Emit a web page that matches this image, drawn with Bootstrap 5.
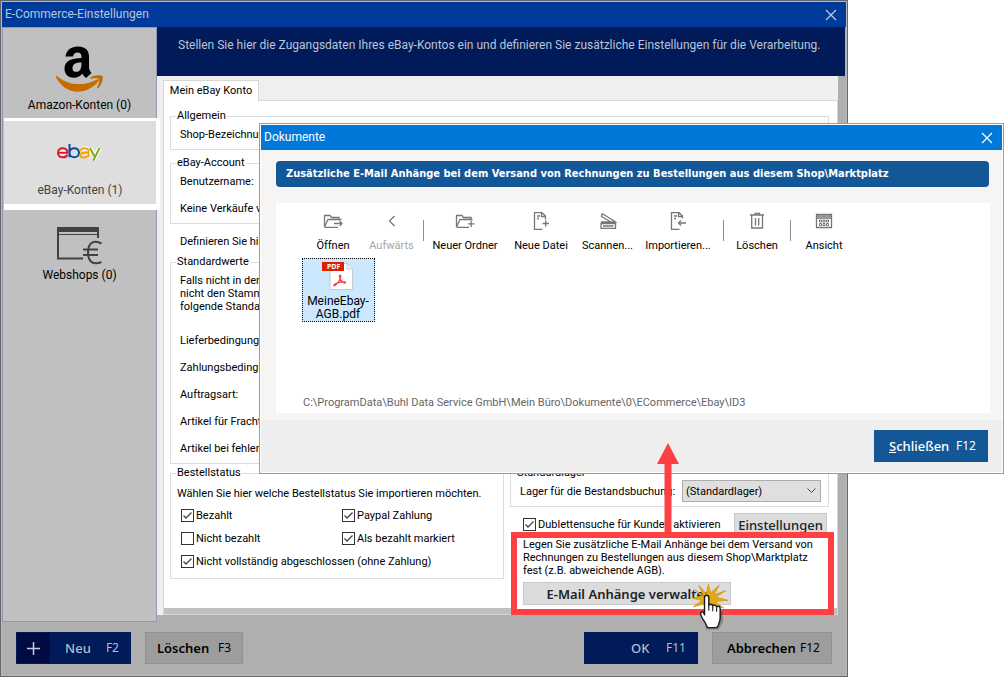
<!DOCTYPE html>
<html lang="de">
<head>
<meta charset="utf-8">
<meta name="viewport" content="width=device-width, initial-scale=1">
<title>E-Commerce-Einstellungen</title>
<link rel="stylesheet" href="https://cdn.jsdelivr.net/npm/bootstrap@5.3.0/dist/css/bootstrap.min.css">
<script defer src="https://cdn.jsdelivr.net/npm/bootstrap@5.3.0/dist/js/bootstrap.bundle.min.js"></script>
<style>
  :root { --navy: #001a5a; --dim: #afafaf; --red: #ff4042; --ui: Roboto, "Open Sans", sans-serif; --btn: "Noto Sans", "Open Sans", sans-serif; }
  body { font: 11px/13px var(--ui); color: #000; background: #fff; }
  svg { display: block; }

  /* main window */
  .app { width: calc(100% - 156px); border: 1px solid #666; box-shadow: inset 0 0 0 1px #b9b9b9; padding: 1px; background: var(--dim); }
  .app-title { height: 25px; background: #003a9b; color: #b9c6dc; font-size: 12px; padding: 0 9px 0 3px; }
  .plain { border: 0; background: none; color: inherit; padding: 0; font: inherit; }
  .side { width: 155px; flex: none; background: #c0c0c0; border: 1px solid #9397b8; position: relative; z-index: 1; }
  .side-item { width: 100%; height: 80px; border: 0; background: none; padding: 0 0 8px; font: 12px/14px var(--ui); color: #000; display: flex; flex-direction: column; align-items: center; justify-content: flex-end; gap: 3px; }
  .side-item.first { height: 90px; padding-bottom: 6px; gap: 4px; }
  .side-item.current { height: 92px; width: 156px; margin-left: 1px; background: #dedede; border: solid #fff; border-width: 3px 4px 6px 0; color: #444; padding-bottom: 7px; gap: 20px; }
  .intro { height: 49px; background: var(--navy); color: #bcc5d4; font-size: 12px; padding: 12px 20px 0 21px; margin-right: 1px; }
  .content { background: #efefef; margin: 0 8px 7px 0; padding: 4px 0 0 6px; }
  .tab { height: 21px; width: 96px; background: #fff; border: 1px solid #d6d6d6; border-bottom: 0; margin-bottom: -1px; z-index: 1; font: 11px/13px var(--ui); padding: 0 0 2px; color: #000; }
  .pane { background: #fff; border: 1px solid #d6d6d6; padding: 8px 8px 0 6px; display: flex; flex-direction: column; gap: 6px; }
  .shade { height: 6px; background: #c0c0c0; margin: auto -8px 0 -6px; }
  fieldset { border: 1px solid #dcdcdc; padding: 0 8px 8px 9px; }
  fieldset legend { float: none; width: auto; font: inherit; margin: 0 0 0 -4px; padding: 0 1px; line-height: 14px; height: 14px; }
  .rows { display: flex; flex-direction: column; gap: 14px; padding-top: 5px; }
  .hint { padding: 5px 0 1px 10px; }
  .lines { margin-bottom: 7px; }
  .lower { display: flex; gap: 6px; align-items: flex-start; margin: -4px 0 -6px; }
  .status { flex: 0 0 334px; padding-bottom: 5px; }
  .status p { margin: 7px 0 4px -3px; }
  .ticks { display: grid; grid-template-columns: 161px auto; }
  .whole { grid-column: span 2; }
  .tick { display: flex; align-items: center; gap: 2px; height: 23px; padding-left: 1px; }
  .tick input { appearance: none; width: 13px; height: 13px; margin: 0; border: 1px solid #333; background: #fff; flex: none; }
  .tick input:checked { background: #fff url("data:image/svg+xml,%3Csvg xmlns='http://www.w3.org/2000/svg' viewBox='0 0 11 11'%3E%3Cpath d='M1.500 5.500 4 8 9.500 2.500' fill='none' stroke='%23444' stroke-width='1.3'/%3E%3C/svg%3E"); }
  .store-set { padding-bottom: 4px; padding-right: 7px; }
  .store { width: 139px; height: 22px; border: 1px solid #adadad; background: #dfdfdf url("data:image/svg+xml,%3Csvg xmlns='http://www.w3.org/2000/svg' width='9' height='6' viewBox='0 0 9 6'%3E%3Cpath d='M.5.5 4.5 4.5 8.5.5' fill='none' stroke='%23444'/%3E%3C/svg%3E") no-repeat right 4px center; appearance: none; font: 11px/13px var(--ui); padding: 0 3px; border-radius: 0; }
  .greybtn { border: 1px solid #c8c8c8; background: #dcdcdc; font: 600 13px/18px var(--btn); color: #222; padding: 0; height: 23px; }
  .double { padding: 6px 2px 0 12px; }
  .setup { width: 93px; font-weight: 500; }
  .callout-box { border: 6px solid var(--red); margin: -4px -5px -7px 1px; padding: 0 6px; height: 83px; position: relative; background: #fff; }
  .manage { width: 208px; margin-top: 5px; padding-left: 5px; }
  .arrow { position: absolute; left: 140px; bottom: 100%; z-index: 30; }
  .pointer { position: absolute; left: 175px; top: 43px; z-index: 5; }
  .foot { height: 53px; padding: 10px 14px 0 14px; }
  .cmd { height: 32px; border: 0; background: var(--navy); color: #b4bccb; font: 500 13px/16px var(--btn); display: flex; align-items: center; justify-content: space-between; padding: 0 12px; }
  .cmd span:last-child { font: 12px/16px var(--btn); }
  .cmd.grey { background: #9d9d9d; border: 1px solid #919191; color: #000; font-weight: 600; padding: 0 11px; }
  .cmd.new { width: 115px; padding: 0 12px 0 1px; }
  .plus { width: 33px; height: 30px; background: #000b42; padding: 8px 9px; }
  .del { width: 98px; margin-left: 14px; }
  .cmd.ok { width: 114px; margin-left: auto; padding-left: 47px; }
  .cancel { width: 120px; margin-left: 14px; }
  .foot .cancel { padding-left: 14px; }

  /* documents dialog */
  .dlg { position: absolute; top: 123px; left: 259px; right: 0; z-index: 20; border: 1px solid #9b9b9b; background: #f6f5f3; box-shadow: inset 0 0 0 1px #fff; padding: 1px; }
  .dlg-title { height: 25px; background: #0078d9; color: #fff; font-size: 12px; padding: 0 9px 0 3px; }
  .banner { margin: 11px 13px 0 15px; height: 26px; border-radius: 4px; background: #145796; color: #fff; font: bold 11px/25px "DejaVu Sans Condensed", "DejaVu Sans", sans-serif; padding: 0 10px; }
  .files { margin: 16px 12px 7px 15px; background: #fff; height: 210px; display: flex; flex-direction: column; }
  .tools { padding: 8px 0 0 27px; height: 55px; display: flex; }
  .tool { border: 0; background: none; padding: 0; color: #000; font: 11px/13px var(--ui); display: flex; flex-direction: column; align-items: center; gap: 8px; height: 41px; flex: none; white-space: nowrap; }
  .tool:disabled { color: #a5a5a5; }
  .tool svg { width: 20px; height: 20px; fill: none; stroke: #777; stroke-width: 1.3; }
  .sep { width: 1px; height: 21px; background: #8c8c8c; margin: 9px 3px 0; flex: none; }
  .w57 { width: 57px; } .w60 { width: 60px; } .w76 { width: 76px; } .w84 { width: 84px; }
  .file { width: 73px; height: 64px; margin-left: 26px; background: #cce8ff; border: 1px dotted #000; font: 12px/13px var(--ui); text-align: center; padding: 2px 1px 0 0; color: #000; display: flex; flex-direction: column; align-items: center; gap: 3px; }
  .path { color: #666; margin: auto 0 4px 27px; }
  .dlg-foot { background: #eee; height: 52px; padding: 10px 14px 0; display: flex; justify-content: flex-end; }
  .close-cmd { width: 114px; background: #145796; color: #fff; padding: 0 12px 0 15px; }
</style>
</head>
<body class="position-relative">
<main class="app min-vh-100 d-flex flex-column">
  <header class="app-title d-flex align-items-center justify-content-between">
    <span>E-Commerce-Einstellungen</span>
    <button class="plain" aria-label="Fenster schließen"><svg width="12" height="12" viewBox="0 0 12 12" fill="none" stroke="#c0cbdc" stroke-width="1.2"><path d="M1 1 11 11M11 1 1 11"/></svg></button>
  </header>
  <div class="d-flex flex-grow-1">
    <nav class="side">
      <button class="side-item first">
        <svg width="50" height="50" viewBox="0 0 50 50"><path fill="#000" d="M10.500 12.500C11.500 6 16 2.500 23 2.500c7 0 11 3.500 11 10v10.500c0 2.500.700 3.800 2.500 6L31.100 34c-1.700-1.300-3-3-3.700-4.300-2.500 2.700-5 4-8.600 4-5.200 0-9.300-3.200-9.300-9 0-8 6.500-10.400 17-10.700v-1.200c0-2.800-1.100-4.400-4-4.400-2.500 0-4 1.300-4.500 4.100zM26.500 18.400c-6 .1-9 1.600-9 5.500 0 2.500 1.300 3.900 3.700 3.900 3.800 0 5.500-3.400 5.300-9.400z"/><path fill="#c56c00" d="M1 32.500c.3-.6.900-.5 1.400-.1 11.600 9.400 27 10 39.600 3 1.500-.8 2.700.6 1.400 1.900C32 51.500 11.500 52 1.300 34c-.3-.6-.5-1.100-.3-1.500z"/><path fill="#c56c00" d="M35.500 33.500c3.500-3 10.500-2.800 11.900-1.300 1.200 2-.5 8.800-4.400 12.100-.7.600-1.300.3-1-.5 1-2.500 3-7.300 2.100-8.700-.9-1.200-5.600-.7-7.800-.3-.8.100-1.300-.6-.8-1.300z"/></svg>
        <span>Amazon-Konten (0)</span>
      </button>
      <button class="side-item current">
        <svg width="48" height="20" viewBox="1 0 46 20" fill="none" stroke-width="2"><g stroke="#fff" stroke-width="4"><path d="M2 9.500h9.500M25.500 7.500c1-3 7-3 7 .5v6.500M34.500 5l4.300 8.500M43.500 5 37.500 17"/></g><path stroke="#d9192f" d="M2 9.700h9.500C11.500 3.700 2 3.700 2 9.700c0 5.700 8 5.700 9.300 1.900"/><path stroke="#1048a5" d="M13.500 1v13.300M13.500 9.700c0-6 9.500-6 9.500 0s-9.500 6-9.500 0"/><path stroke="#f0a800" d="M24.800 8c0-3.800 7.700-3.800 7.700 0v6.300M32.500 9.200c-5 0-8.200.4-8.200 3 0 3.500 8.200 2.800 8.200-1.200"/><path stroke="#7daf18" d="m34 5 4.700 8.700M43.500 5 37.300 17.500"/></svg>
        <span>eBay-Konten (1)</span>
      </button>
      <button class="side-item">
        <svg width="46" height="38" viewBox="0 0 46 38" fill="none" stroke="#414141" stroke-width="2"><path d="M1 30V1h40v10"/><path d="M1 3h40" stroke-width="4"/><path d="M1 7.500h40" stroke-width="1"/><path d="M1 30v1.500h25M44.500 16.500c-8-4-13.500-.5-13.500 9s5.500 13 13.500 9.500M26 22.500h15M26 28h15"/></svg>
        <span>Webshops (0)</span>
      </button>
    </nav>
    <section class="flex-grow-1 d-flex flex-column">
      <div class="intro">Stellen Sie hier die Zugangsdaten Ihres eBay-Kontos ein und definieren Sie zusätzliche Einstellungen für die Verarbeitung.</div>
      <div class="content flex-grow-1 d-flex flex-column">
        <button class="tab position-relative">Mein eBay Konto</button>
        <div class="pane flex-grow-1">
          <fieldset><legend>Allgemein</legend><div class="rows">Shop-Bezeichnung:</div></fieldset>
          <fieldset><legend>eBay-Account</legend><div class="rows"><div>Benutzername:</div><div>Keine Verkäufe vor</div></div></fieldset>
          <div class="hint">Definieren Sie hier</div>
          <fieldset><legend>Standardwerte</legend>
            <div class="rows">
              <div class="lines">Falls nicht in den<br>nicht den Stammdaten<br>folgende Standardwerte</div>
              <div>Lieferbedingung:</div>
              <div>Zahlungsbedingung:</div>
              <div>Auftragsart:</div>
              <div>Artikel für Fracht</div>
              <div>Artikel bei fehlenden</div>
            </div>
          </fieldset>
          <div class="lower">
            <fieldset class="status"><legend>Bestellstatus</legend>
              <p>Wählen Sie hier welche Bestellstatus Sie importieren möchten.</p>
              <div class="ticks">
                <label class="tick"><input type="checkbox" checked>Bezahlt</label>
                <label class="tick"><input type="checkbox" checked>Paypal Zahlung</label>
                <label class="tick"><input type="checkbox">Nicht bezahlt</label>
                <label class="tick"><input type="checkbox" checked>Als bezahlt markiert</label>
                <label class="tick whole"><input type="checkbox" checked>Nicht vollständig abgeschlossen (ohne Zahlung)</label>
              </div>
            </fieldset>
            <div class="flex-grow-1">
              <fieldset class="store-set"><legend>Standardlager</legend>
                <div class="d-flex align-items-center justify-content-between"><label for="lager">Lager für die Bestandsbuchung:</label>
                <select id="lager" class="store"><option>(Standardlager)</option></select></div>
              </fieldset>
              <div class="double d-flex justify-content-between"><label class="tick"><input type="checkbox" checked>Dublettensuche für Kunden aktivieren</label><button class="greybtn setup">Einstellungen</button></div>
              <div class="callout-box">
                <div>Legen Sie zusätzliche E-Mail Anhänge bei dem Versand von Rechnungen zu Bestellungen aus diesem Shop\Marktplatz fest (z.B. abweichende AGB).</div>
                <button class="greybtn manage">E-Mail Anhänge verwalten</button>
                <svg class="arrow" width="22" height="95" viewBox="0 0 22 95" fill="#ff4042"><path d="M11 0 22 21H14.500V95H7.500V21H0z"/></svg>
                <svg class="pointer" width="40" height="52" viewBox="0 0 40 52">
                  <path transform="translate(-3 1) scale(1.080)" fill="#e3a917" stroke="#d69a10" stroke-width=".8" d="m14 14-5-11 7 8 2-9 2 8 8-7-5 9 11-4-9 6 11 3-12 1 8 6-11-4-2 8-4-8-11 3 8-6-9-2 9-2-7-6z"/>
                  <g transform="translate(-1 0) scale(1.080)">
                  <path fill="#444" opacity=".4" d="M11 28h18.500v10l-4 7H14z"/>
                  <path fill="#fff" stroke="#1a1a1a" stroke-width="1.300" stroke-linejoin="round" d="M12.500 29V15.500c0-3 4-3 4 0V23c0-2 3.600-2 3.600.4 0-1.700 3.600-1.500 3.600.9.500-1.500 3.300-1.300 3.300.9V34c0 3-1 4.500-1.500 6.500-1 2.700-2 2.700-4 2.700h-4c-2 0-2.700 0-3.300-2.200-.7-2.500-2.500-4-4-7-1.500-3-2-4.500-.4-5.300 1.300-.7 2.100.4 2.700 2.600z"/>
                  <path stroke="#1a1a1a" fill="none" d="M16.500 23v4.500M20.100 24v4M23.700 25v3.500"/>
                  </g>
                </svg>
              </div>
            </div>
          </div>
          <div class="shade"></div>
        </div>
      </div>
    </section>
  </div>
  <footer class="foot d-flex">
    <button class="cmd new"><span class="plus"><svg width="15" height="15" viewBox="0 0 15 15" stroke="#c9cddb" stroke-width="1.500"><path d="M7.500 1v13M1 7.500h13"/></svg></span><span>Neu</span><span>F2</span></button>
    <button class="cmd grey del"><span>Löschen</span><span>F3</span></button>
    <button class="cmd ok"><span>OK</span><span>F11</span></button>
    <button class="cmd grey cancel"><span>Abbrechen</span><span>F12</span></button>
  </footer>
</main>

<div class="dlg" role="dialog" aria-label="Dokumente">
  <header class="dlg-title d-flex align-items-center justify-content-between">
    <span>Dokumente</span>
    <button class="plain" aria-label="Dialog schließen"><svg width="12" height="12" viewBox="0 0 12 12" fill="none" stroke="#fff" stroke-width="1.2"><path d="M1 1 11 11M11 1 1 11"/></svg></button>
  </header>
  <div class="banner">Zusätzliche E-Mail Anhänge bei dem Versand von Rechnungen zu Bestellungen aus diesem Shop\Marktplatz</div>
  <div class="files">
    <div class="tools">
      <button class="tool w60"><svg viewBox="0 0 20 20"><path d="M1.500 16V4.500H7L8.500 6.500H16V8M1.500 16 5 8.500h13.500M1.500 16.300H15M11 12.500h8M16.500 10l2.500 2.500-2.500 2.500"/></svg>Öffnen</button>
      <button class="tool w57" disabled><svg viewBox="0 0 20 20"><path d="M12.500 5 7.500 10l5 5"/></svg>Aufwärts</button>
      <span class="sep"></span>
      <button class="tool w76"><svg viewBox="0 0 20 20"><path d="M1.500 16V4.500H7L8.500 6.500H16V8M1.500 16 5 8.500h12.500M1.500 16.300H14M13 12.800h6.500M16.200 9.700v6.300"/></svg>Neuer Ordner</button>
      <button class="tool w76"><svg viewBox="0 0 20 20"><path d="M11.500 18.300h-8V1.700H11L14.500 5v3.500M10.500 2v3.500h4M6 5h3M6 7.500h2M11.500 12.500h6.500M14.700 9.300v6.400"/></svg>Neue Datei</button>
      <button class="tool w57"><svg viewBox="0 0 20 20"><path d="M4 2.500 17 10.500M4 2.500 3.500 5.500l9.500 5.500M3 11h14.500L13 8M3 12.500h14.500v4.800H3zM5 15h10.500"/></svg>Scannen...</button>
      <button class="tool w84"><svg viewBox="0 0 20 20"><path d="M11.500 18.300h-8V1.700H11L14.500 5v2.500M10.500 2v3.500h4M6 5h3M6 7.500h2M10.500 12h7.500M13 9.500 10.500 12l2.500 2.500"/></svg>Importieren...</button>
      <span class="sep"></span>
      <button class="tool w60"><svg viewBox="0 0 20 20"><path d="M3 4h14M8 4V2.300h4.500V4M4.700 4.500V17h10.800V4.500M8.500 7v7.500M11.700 7v7.500"/></svg>Löschen</button>
      <span class="sep"></span>
      <button class="tool w60"><svg viewBox="0 0 20 20"><path d="M2.500 3.500h15v13h-15zM2.500 5.200h15M2.500 7h15"/><path stroke-width="1" d="M5.500 9h2v2h-2zM9 9h2v2H9zM12.500 9h2v2h-2zM5.500 12.500h2v2h-2zM9 12.500h2v2H9zM12.500 12.500h2v2h-2z"/></svg>Ansicht</button>
    </div>
    <button class="file">
      <svg width="32" height="31" viewBox="0 0 32 31"><path fill="#fff" stroke="#c9c9c9" d="M8 2.500h17.500L30.500 8v20.500H8z"/><path fill="#eee" stroke="#ccc" d="M25 2.500V8h5.500"/><path fill="#e11f00" d="M0 1h22v9H0z"/><text x="5" y="8" font-family="Noto Sans, sans-serif" font-size="7" font-weight="700" fill="#fff">PDF</text><path fill="none" stroke="#ee4040" stroke-width="1.200" d="M18 14c2 0 0 7-5 10.500-2 1.300-1.500-1.500 2-2.500 3-1 9-2 8.500-.3-.5 1.500-5.500-2.200-6-5.700-.1-1 0-2 .5-2z"/></svg>
      <span>MeineEbay-<br>AGB.pdf</span>
    </button>
    <div class="path">C:\ProgramData\Buhl Data Service GmbH\Mein Büro\Dokumente\0\ECommerce\Ebay\ID3</div>
  </div>
  <footer class="dlg-foot"><button class="cmd close-cmd"><span><u>S</u>chließen</span><span>F12</span></button></footer>
</div>
</body>
</html>
